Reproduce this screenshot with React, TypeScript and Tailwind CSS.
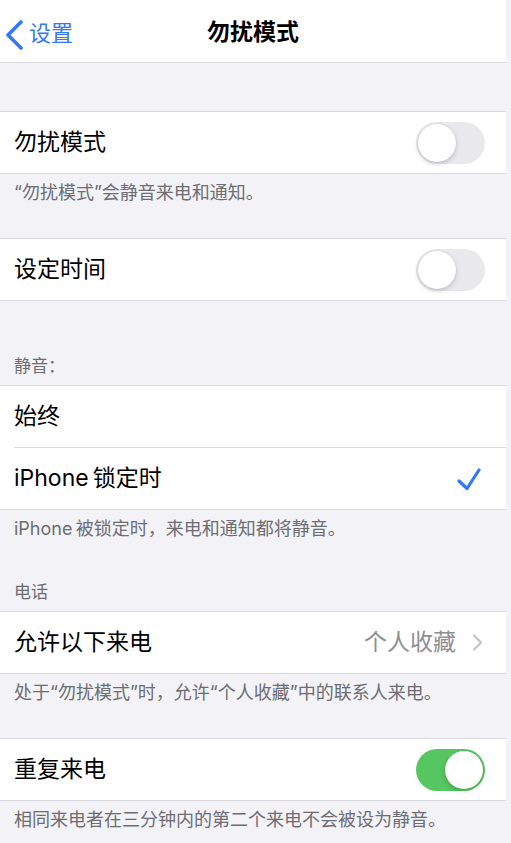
import type { ReactNode } from 'react';

const FONT = { fontFamily: '"Inter", "Noto Sans CJK SC", sans-serif' };

function Toggle({ on }: { on: boolean }) {
  return (
    <div
      className={`relative h-[42px] w-[69px] rounded-full ${
        on ? 'bg-[#55c660]' : 'bg-[#e9e9eb]'
      }`}
    >
      <div
        className={`absolute top-[2px] h-[38px] w-[38px] rounded-full bg-white shadow-[0_2px_5px_rgba(0,0,0,0.18),0_0_0_0.5px_rgba(0,0,0,0.06)] ${
          on ? 'left-[29px]' : 'left-[2px]'
        }`}
      />
    </div>
  );
}

function Check() {
  return (
    <svg width="24" height="24" viewBox="0 0 24 24" fill="none">
      <path
        d="M2 14 L10 21.5 L22 3"
        stroke="#3478f6"
        strokeWidth="3.2"
        strokeLinecap="round"
        strokeLinejoin="round"
      />
    </svg>
  );
}

function Chevron() {
  return (
    <svg width="11" height="17" viewBox="0 0 11 17" fill="none">
      <path
        d="M2 1.5 L9 8.5 L2 15.5"
        stroke="#c4c4c7"
        strokeWidth="2.2"
        strokeLinecap="round"
        strokeLinejoin="round"
      />
    </svg>
  );
}

function Row({ label, children }: { label: string; children?: ReactNode }) {
  return (
    <div className="flex h-[61px] items-center justify-between pl-[14px] pr-[21px]">
      <span className="text-[23px] text-black">{label}</span>
      {children}
    </div>
  );
}

function Group({ children }: { children: ReactNode }) {
  return <div className="border-y border-[#d9d9de] bg-white">{children}</div>;
}

function Footer({ text }: { text: string }) {
  return (
    <div className="h-[64px] px-[14px] pt-[7px] text-[18px] leading-[24px] text-[#6d6d72]">
      {text}
    </div>
  );
}

function Header({ text, height }: { text: string; height: string }) {
  return (
    <div
      className={`flex items-end px-[14px] pb-[7px] text-[17px] leading-[24px] text-[#6d6d72] ${height}`}
    >
      {text}
    </div>
  );
}

export default function App() {
  return (
    <div className="min-h-[843px] bg-[#f2f2f7]" style={FONT}>
      <div className="w-[506px]">
        {/* navigation bar */}
        <div className="relative flex h-[63px] items-center justify-center border-b border-[#d9d9de] bg-white pt-[3px]">
          <div className="absolute left-[5px] top-[19px] flex items-center">
            <svg width="20" height="30" viewBox="0 0 20 30" fill="none">
              <path
                d="M16 2 L3 15 L16 28"
                stroke="#3478f6"
                strokeWidth="3.6"
                strokeLinecap="round"
                strokeLinejoin="round"
              />
            </svg>
            <span className="-mt-[2px] ml-[4px] text-[22px] text-[#3478f6]">设置</span>
          </div>
          <span className="text-[23px] font-semibold text-black">勿扰模式</span>
        </div>

        <div className="h-[48px]" />

        <Group>
          <Row label="勿扰模式">
            <Toggle on={false} />
          </Row>
        </Group>
        <Footer text="“勿扰模式”会静音来电和通知。" />

        <Group>
          <Row label="设定时间">
            <Toggle on={false} />
          </Row>
        </Group>
        <Header text="静音：" height="h-[84px]" />

        <Group>
          <Row label="始终" />
          <div className="ml-[14px] h-px bg-[#d9d9de]" />
          <Row label={'iPhone\u2009锁定时'}>
            <div className="mr-[4px]">
              <Check />
            </div>
          </Row>
        </Group>
        <Footer text={'iPhone\u2009被锁定时，来电和通知都将静音。'} />
        <Header text="电话" height="h-[37px]" />

        <Group>
          <Row label="允许以下来电">
            <div className="flex items-center gap-[16px] pr-[2px]">
              <span className="text-[23px] text-[#8e8e93]">个人收藏</span>
              <Chevron />
            </div>
          </Row>
        </Group>
        <Footer text="处于“勿扰模式”时，允许“个人收藏”中的联系人来电。" />

        <Group>
          <Row label="重复来电">
            <Toggle on={true} />
          </Row>
        </Group>
        <Footer text="相同来电者在三分钟内的第二个来电不会被设为静音。" />
      </div>
    </div>
  );
}
